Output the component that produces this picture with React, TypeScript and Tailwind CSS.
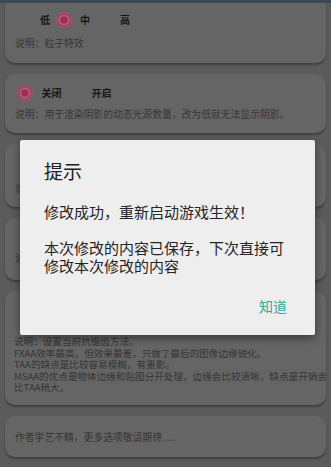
import React from "react";

const FONT = { fontFamily: '"Noto Sans CJK SC", "Noto Sans", sans-serif' };

function Ring() {
  return (
    <svg width="16" height="16" viewBox="0 0 16 16" className="shrink-0">
      <circle cx="8" cy="8" r="8" fill="#86707a" />
      <circle cx="8" cy="8" r="6.4" fill="#94757f" stroke="#b23e62" strokeWidth="2.5" />
      <circle cx="8" cy="8" r="3.7" fill="#a82a52" />
    </svg>
  );
}

function Option({ label, selected }: { label: string; selected?: boolean }) {
  return (
    <div className="flex items-center h-[16px] pr-[5.5px]">
      <div className="w-[16px] h-[16px] mr-[8.5px]">{selected ? <Ring /> : null}</div>
      <span className="text-[10px] leading-[12px] font-bold text-[#161616]">{label}</span>
    </div>
  );
}

function Desc({ children }: { children: React.ReactNode }) {
  return <div className="text-[9.8px] leading-[12px] text-[#353535] whitespace-nowrap">{children}</div>;
}

export default function App() {
  return (
    <div className="relative w-[331px] h-[467px] overflow-hidden bg-[#5b5b5b]" style={FONT}>
      <div className="absolute top-0 left-0 right-0 h-[3px] bg-[#3d4857] z-10" />
      <div className="flex flex-col gap-[11px] px-[5px] -mt-[6px]">
        <div className="rounded-[10px] bg-[#656565] shadow-[0_2px_2px_rgba(0,0,0,0.3)] pl-[10px] pr-[10px] pt-[18px] pb-[14px]">
          <div className="flex pl-[0.5px]">
            <Option label="低" />
            <Option label="中" selected />
            <Option label="高" />
          </div>
          <div className="mt-[9px]">
            <Desc>说明：粒子特效</Desc>
          </div>
        </div>

        <div className="rounded-[10px] bg-[#656565] shadow-[0_2px_2px_rgba(0,0,0,0.3)] pl-[10px] pr-[10px] pt-[11px] pb-[13px]">
          <div className="flex pl-[2px]">
            <Option label="关闭" selected />
            <Option label="开启" />
          </div>
          <div className="mt-[7px]">
            <Desc>说明：用于渲染阴影的动态光源数量，改为低就无法显示阴影。</Desc>
          </div>
        </div>

        <div className="rounded-[10px] bg-[#656565] shadow-[0_2px_2px_rgba(0,0,0,0.3)] pl-[10px] pr-[10px] pt-[15px] pb-[13px]">
          <div className="flex">
            <Option label="低" />
            <Option label="中" selected />
            <Option label="高" />
          </div>
          <div className="mt-[7px]">
            <Desc>说明：阴影质量，改为低可以提升帧数。</Desc>
          </div>
        </div>

        <div className="rounded-[10px] bg-[#656565] shadow-[0_2px_2px_rgba(0,0,0,0.3)] pl-[10px] pr-[10px] pt-[11px] pb-[16px]">
          <div className="flex">
            <Option label="低" />
            <Option label="中" selected />
            <Option label="高" />
          </div>
          <div className="mt-[7px]">
            <Desc>说明：后期处理效果，改为低可以提升帧数。</Desc>
          </div>
        </div>

        <div className="rounded-[10px] bg-[#656565] shadow-[0_2px_2px_rgba(0,0,0,0.3)] pl-[9px] pr-[4px] pt-[11px] pb-[11px]">
          <div className="flex pl-[2px]">
            <Option label="FXAA" />
            <Option label="TAA" selected />
            <Option label="MSAA" />
          </div>
          <div className="mt-[18px] [&>div]:leading-[11.6px] [&>div]:text-[9.6px]">
            <Desc>说明：设置当前抗锯齿方法。</Desc>
            <Desc>FXAA效率最高，但效果最差，只做了最后的图像边缘锐化。</Desc>
            <Desc>TAA的缺点是比较容易模糊，有重影。</Desc>
            <Desc>MSAA的优点是物体边缘和贴图分开处理，边缘会比较清晰，缺点是开销会</Desc>
            <Desc>比TAA稍大。</Desc>
          </div>
        </div>

        <div className="rounded-[10px] bg-[#656565] shadow-[0_2px_2px_rgba(0,0,0,0.3)] pl-[10px] pr-[10px] pt-[15px] pb-[14px]">
          <Desc>作者学艺不精，更多选项敬请期待.....</Desc>
        </div>
      </div>

      <div className="absolute left-[20px] top-[140px] w-[295px] h-[195px] bg-[#eeeeee] rounded-[2px] shadow-[0_3px_8px_rgba(0,0,0,0.45)] pl-[24px] pt-[19px] pr-[24px]">
        <div className="text-[19px] leading-[24px] text-[#202020]">提示</div>
        <div className="mt-[20px] text-[15px] leading-[18px] text-[#242424] whitespace-nowrap">
          <div>修改成功，重新启动游戏生效！</div>
          <div className="h-[18px]" />
          <div>本次修改的内容已保存，下次直接可</div>
          <div>修改本次修改的内容</div>
        </div>
        <div className="mt-[21px] flex justify-end pr-[4px]">
          <span className="text-[14px] leading-[20px] text-[#35a59b]">知道</span>
        </div>
      </div>
    </div>
  );
}
